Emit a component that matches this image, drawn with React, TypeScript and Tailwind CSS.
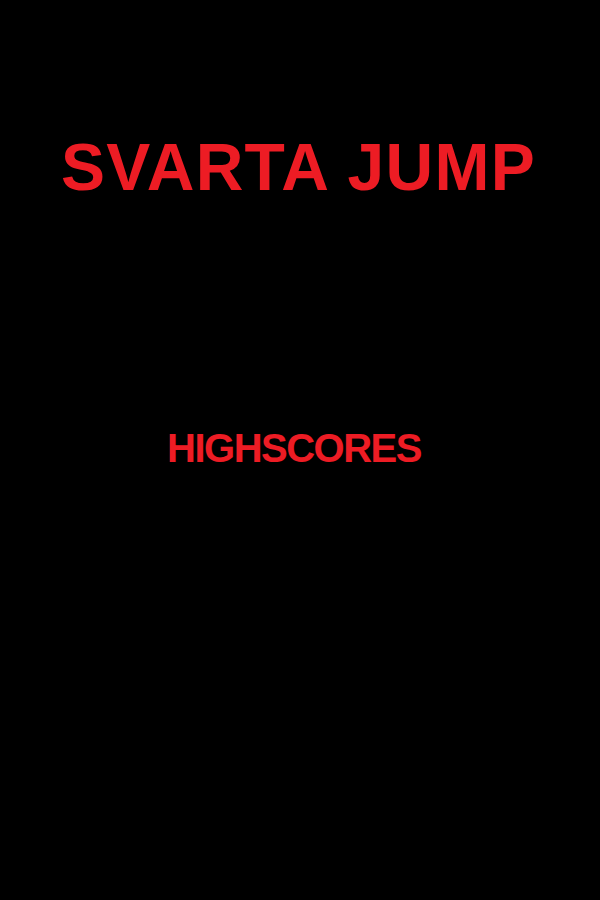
export default function App() {
  return (
    <div className="w-[600px] h-[900px] bg-black flex flex-col items-center" style={{ fontFamily: '"Liberation Sans", Arial, sans-serif' }}>
      <h1 className="mt-[134px] mr-[3px] text-[66px] leading-none font-bold text-[#ED1C24] tracking-[1.3px] whitespace-nowrap">SVARTA JUMP</h1>
      <div className="mt-[228px] mr-[12px] text-[40px] leading-none font-bold text-[#ED1C24] tracking-[-1.5px] whitespace-nowrap">HIGHSCORES</div>
    </div>
  );
}
